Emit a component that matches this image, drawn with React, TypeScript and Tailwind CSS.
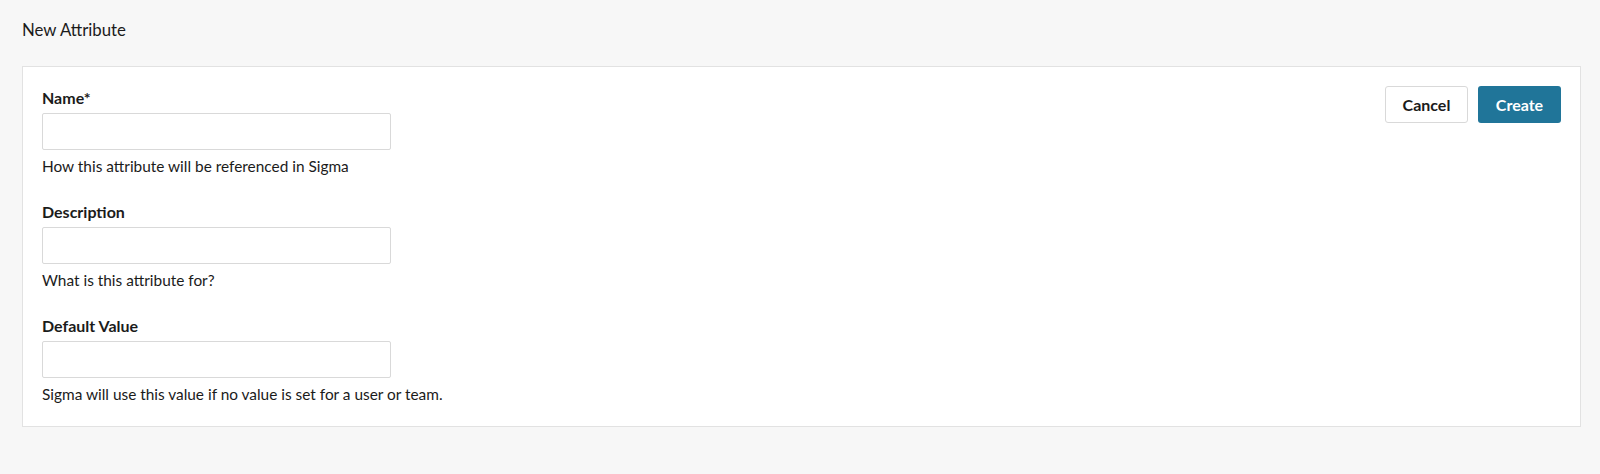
export default function App() {
  const fields = [
    { label: 'Name*', help: 'How this attribute will be referenced in Sigma' },
    { label: 'Description', help: 'What is this attribute for?' },
    { label: 'Default Value', help: 'Sigma will use this value if no value is set for a user or team.' },
  ];

  return (
    <div className="min-h-[474px] bg-[#f7f7f7] pl-[22px] pr-[19px] pt-[18px] text-[#1b1b1b] font-['Lato','Liberation_Sans',sans-serif]">
      <h1 className="text-[16.8px] leading-[24px]">New Attribute</h1>
      <div className="mt-[24px] flex justify-between border border-[#e2e2e2] bg-white pl-[19px] pr-[19px] pt-[19px] pb-[22px]">
        <div className="flex flex-col gap-[24px]">
          {fields.map((f) => (
            <div key={f.label} className="flex flex-col">
              <label className="text-[16px] font-bold leading-[24px]">{f.label}</label>
              <input
                type="text"
                className="mt-[3px] h-[37px] w-[349px] rounded-[2px] border border-[#d9d9d9] bg-white px-2 text-[15px] outline-none"
              />
              <p className="mt-[6px] text-[15.4px] leading-[20px]">{f.help}</p>
            </div>
          ))}
        </div>
        <div className="flex items-start gap-[10px]">
          <button className="h-[37px] w-[83px] rounded-[3px] border border-[#d9d9d9] bg-white text-[16px] font-bold text-[#1b1b1b]">
            Cancel
          </button>
          <button className="h-[37px] w-[83px] rounded-[3px] bg-[#207599] text-[16px] font-bold text-white">
            Create
          </button>
        </div>
      </div>
    </div>
  );
}
